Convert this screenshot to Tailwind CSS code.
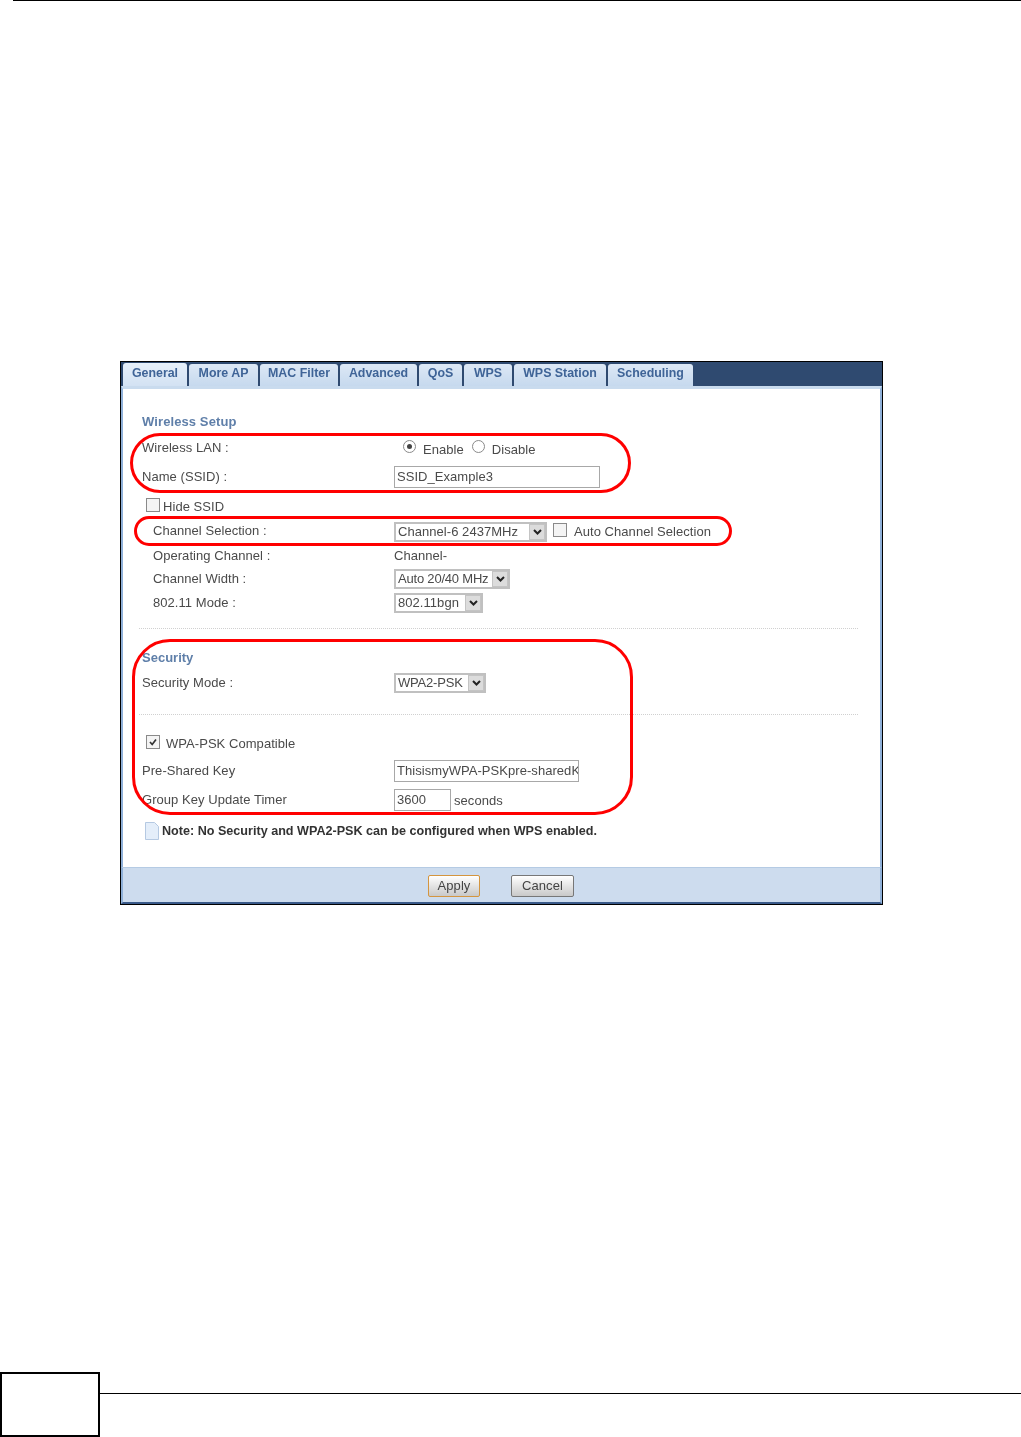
<!DOCTYPE html>
<html>
<head>
<meta charset="utf-8">
<script src="https://cdn.jsdelivr.net/npm/@tailwindcss/browser@4"></script>
</head>
<body class="bg-white font-['Liberation_Sans',Arial,sans-serif]">
<div class="relative w-[1021px] h-[1437px] overflow-hidden flex flex-col">
  <div class="h-px ml-[13px] bg-black shrink-0"></div>

  <div class="relative ml-[120px] mt-[360px] w-[763px] h-[544px] border border-black bg-white flex flex-col shrink-0 text-[13px] tracking-[0.05px] text-[#4a4a4a] blur-[0.4px]">
    <div class="h-[24px] bg-[#2f4a70] flex items-end gap-[2px] pl-[2px] shrink-0 text-[#3f6497] font-bold text-[12.4px] tracking-[0px]">
      <div class="w-[64px] h-[23px] bg-gradient-to-b from-[#e6eff9] to-[#d3e2f3] rounded-t-[3px] flex items-center justify-center pb-[3px]">General</div>
      <div class="w-[69px] h-[22px] bg-gradient-to-b from-[#dde8f5] to-[#c6d9ee] rounded-t-[3px] flex items-center justify-center pb-[3px]">More AP</div>
      <div class="w-[78px] h-[22px] bg-gradient-to-b from-[#dde8f5] to-[#c6d9ee] rounded-t-[3px] flex items-center justify-center pb-[3px]">MAC Filter</div>
      <div class="w-[77px] h-[22px] bg-gradient-to-b from-[#dde8f5] to-[#c6d9ee] rounded-t-[3px] flex items-center justify-center pb-[3px]">Advanced</div>
      <div class="w-[43px] h-[22px] bg-gradient-to-b from-[#dde8f5] to-[#c6d9ee] rounded-t-[3px] flex items-center justify-center pb-[3px]">QoS</div>
      <div class="w-[48px] h-[22px] bg-gradient-to-b from-[#dde8f5] to-[#c6d9ee] rounded-t-[3px] flex items-center justify-center pb-[3px]">WPS</div>
      <div class="w-[92px] h-[22px] bg-gradient-to-b from-[#dde8f5] to-[#c6d9ee] rounded-t-[3px] flex items-center justify-center pb-[3px]">WPS Station</div>
      <div class="w-[85px] h-[22px] bg-gradient-to-b from-[#dde8f5] to-[#c6d9ee] rounded-t-[3px] flex items-center justify-center pb-[3px]">Scheduling</div>
    </div>
    <div class="flex-1 flex flex-col border-x-2 border-[#8fb0d8] border-t-[3px] border-t-[#c9dbee] pl-[19px] min-h-0">
      <div class="h-[22px] shrink-0"></div>
      <div class="h-[22px] flex items-center font-bold text-[#5f7fa9] tracking-[0.1px]">Wireless Setup</div>
      <div class="h-[29px] grid grid-cols-[252px_1fr] items-center">
        <div>Wireless LAN :</div>
        <div class="flex items-center pl-[9px] pt-[5px]">
          <span class="w-[13px] h-[13px] rounded-full border border-[#8a8a8a] flex items-center justify-center mr-[7px] -mt-[7px]"><span class="w-[5px] h-[5px] rounded-full bg-[#444]"></span></span>
          <span>Enable</span>
          <span class="w-[13px] h-[13px] rounded-full border border-[#8a8a8a] ml-[8px] mr-[7px] -mt-[7px]"></span>
          <span>Disable</span>
        </div>
      </div>
      <div class="h-[29px] grid grid-cols-[252px_1fr] items-center">
        <div>Name (SSID) :</div>
        <div class="w-[206px] h-[22px] border border-[#a8a8a8] flex items-center pl-[2px]">SSID_Example3</div>
      </div>
      <div class="h-[28px] flex items-center pl-[4px] pt-[3px]">
        <span class="w-[14px] h-[14px] border border-[#8a8a8a] bg-[#f4f4f4] mr-[3px] -mt-[3px]"></span><span>Hide SSID</span>
      </div>
      <div class="h-[24px] grid grid-cols-[252px_1fr] items-center">
        <div class="pl-[11px]">Channel Selection :</div>
        <div class="flex items-center mt-[2px]">
          <div class="w-[153px] h-[20px] border-2 border-[#c0c0c0] flex items-center justify-between pl-[2px] mr-[6px]">
            <span>Channel-6 2437MHz</span>
            <span class="w-[16px] h-[16px] bg-[#dcdcdc] border border-[#c4c4c4] flex items-center justify-center"><svg width="9" height="6" viewBox="0 0 9 6" fill="none"><path d="M1 1 L4.5 4.5 L8 1" stroke="#222" stroke-width="2"/></svg></span>
          </div>
          <span class="w-[14px] h-[14px] border border-[#8a8a8a] bg-[#f4f4f4] mr-[7px] -mt-[4px]"></span>
          <span>Auto Channel Selection</span>
        </div>
      </div>
      <div class="h-[24px] grid grid-cols-[252px_1fr] items-center">
        <div class="pl-[11px] pt-[2px]">Operating Channel :</div>
        <div class="pt-[2px]">Channel-</div>
      </div>
      <div class="h-[23px] grid grid-cols-[252px_1fr] items-center">
        <div class="pl-[11px]">Channel Width :</div>
        <div class="w-[116px] h-[20px] border-2 border-[#c0c0c0] flex items-center justify-between pl-[2px] mt-[1px]">
          <span class="whitespace-nowrap tracking-[-0.2px]">Auto 20/40 MHz</span>
          <span class="w-[16px] h-[16px] bg-[#dcdcdc] border border-[#c4c4c4] flex items-center justify-center shrink-0"><svg width="9" height="6" viewBox="0 0 9 6" fill="none"><path d="M1 1 L4.5 4.5 L8 1" stroke="#222" stroke-width="2"/></svg></span>
        </div>
      </div>
      <div class="h-[24px] grid grid-cols-[252px_1fr] items-center">
        <div class="pl-[11px] pt-[2px]">802.11 Mode :</div>
        <div class="w-[89px] h-[20px] border-2 border-[#c0c0c0] flex items-center justify-between pl-[2px] mt-[1px]">
          <span>802.11bgn</span>
          <span class="w-[16px] h-[16px] bg-[#dcdcdc] border border-[#c4c4c4] flex items-center justify-center shrink-0"><svg width="9" height="6" viewBox="0 0 9 6" fill="none"><path d="M1 1 L4.5 4.5 L8 1" stroke="#222" stroke-width="2"/></svg></span>
        </div>
      </div>
      <div class="h-[14px]"></div>
      <div class="w-[719px] -ml-[3px] border-t border-dotted border-[#d0d0d0]"></div>
      <div class="h-[19px]"></div>
      <div class="h-[20px] flex items-center font-bold text-[#5f7fa9] tracking-[0px]">Security</div>
      <div class="h-[29px] grid grid-cols-[252px_1fr] items-center">
        <div>Security Mode :</div>
        <div class="w-[92px] h-[20px] border-2 border-[#c0c0c0] flex items-center justify-between pl-[2px]">
          <span class="tracking-[-0.2px]">WPA2-PSK</span>
          <span class="w-[16px] h-[16px] bg-[#dcdcdc] border border-[#c4c4c4] flex items-center justify-center shrink-0"><svg width="9" height="6" viewBox="0 0 9 6" fill="none"><path d="M1 1 L4.5 4.5 L8 1" stroke="#222" stroke-width="2"/></svg></span>
        </div>
      </div>
      <div class="h-[17px]"></div>
      <div class="w-[719px] -ml-[3px] border-t border-dotted border-[#d0d0d0]"></div>
      <div class="h-[16px]"></div>
      <div class="h-[26px] flex items-center pl-[4px]">
        <span class="w-[14px] h-[14px] border border-[#8a8a8a] bg-[#f4f4f4] mr-[6px] -mt-[5px] flex items-center justify-center"><svg width="10" height="10" viewBox="0 0 10 10" fill="none"><path d="M2 5 L4.2 7.5 L8 2.5" stroke="#333" stroke-width="1.7"/></svg></span><span>WPA-PSK Compatible</span>
      </div>
      <div class="h-[28px] grid grid-cols-[252px_1fr] items-center">
        <div>Pre-Shared Key</div>
        <div class="w-[185px] h-[22px] border border-[#a8a8a8] flex items-center pl-[2px] -mt-[1px] overflow-hidden whitespace-nowrap">ThisismyWPA-PSKpre-sharedKey</div>
      </div>
      <div class="h-[29px] grid grid-cols-[252px_1fr] items-center">
        <div>Group Key Update Timer</div>
        <div class="flex items-center">
          <div class="w-[57px] h-[22px] border border-[#a8a8a8] flex items-center pl-[2px] mr-[3px]">3600</div>
          <span class="mt-[2px]">seconds</span>
        </div>
      </div>
      <div class="h-[33px] flex items-center pl-[3px] font-bold text-[#333] text-[12.6px] tracking-[0px] mt-[1px]">
        <svg class="mr-[3px] -mt-[1px]" width="14" height="18" viewBox="0 0 14 18"><path d="M0.5 0.5 H9.5 L13.5 4.5 V17.5 H0.5 Z" fill="#e4eefa" stroke="#b5c9e2"/></svg>
        <span>Note: No Security and WPA2-PSK can be configured when WPS enabled.</span>
      </div>
      <div class="flex-1"></div>
    </div>
    <div class="h-[37px] shrink-0 bg-[#cddcee] border-t border-[#b5cbe4] border-b-2 border-b-[#3a5a8a] border-x-2 border-x-[#8fb0d8] flex items-start pl-[305px] pt-[7px]">
      <div class="w-[52px] h-[22px] border border-[#d4953f] rounded-[2px] bg-gradient-to-b from-white to-[#c9c9c9] flex items-center justify-center text-[#444] mr-[31px]">Apply</div>
      <div class="w-[63px] h-[22px] border border-[#777] rounded-[2px] bg-gradient-to-b from-white to-[#c9c9c9] flex items-center justify-center text-[#444]">Cancel</div>
    </div>
  </div>

  <div class="flex-1"></div>

  <div class="h-[65px] shrink-0 flex items-start">
    <div class="w-[100px] h-[65px] border-2 border-black shrink-0"></div>
    <div class="flex-1 h-[1px] mt-[21px] bg-black"></div>
  </div>

  <div class="absolute left-[130px] top-[433px] w-[501px] h-[60px] border-[3px] border-[#f00] rounded-[30px]"></div>
  <div class="absolute left-[134px] top-[516px] w-[598px] h-[30px] border-[3px] border-[#f00] rounded-[15px]"></div>
  <div class="absolute left-[132px] top-[639px] w-[501px] h-[176px] border-[3px] border-[#f00] rounded-[38px]"></div>
</div>
</body>
</html>
